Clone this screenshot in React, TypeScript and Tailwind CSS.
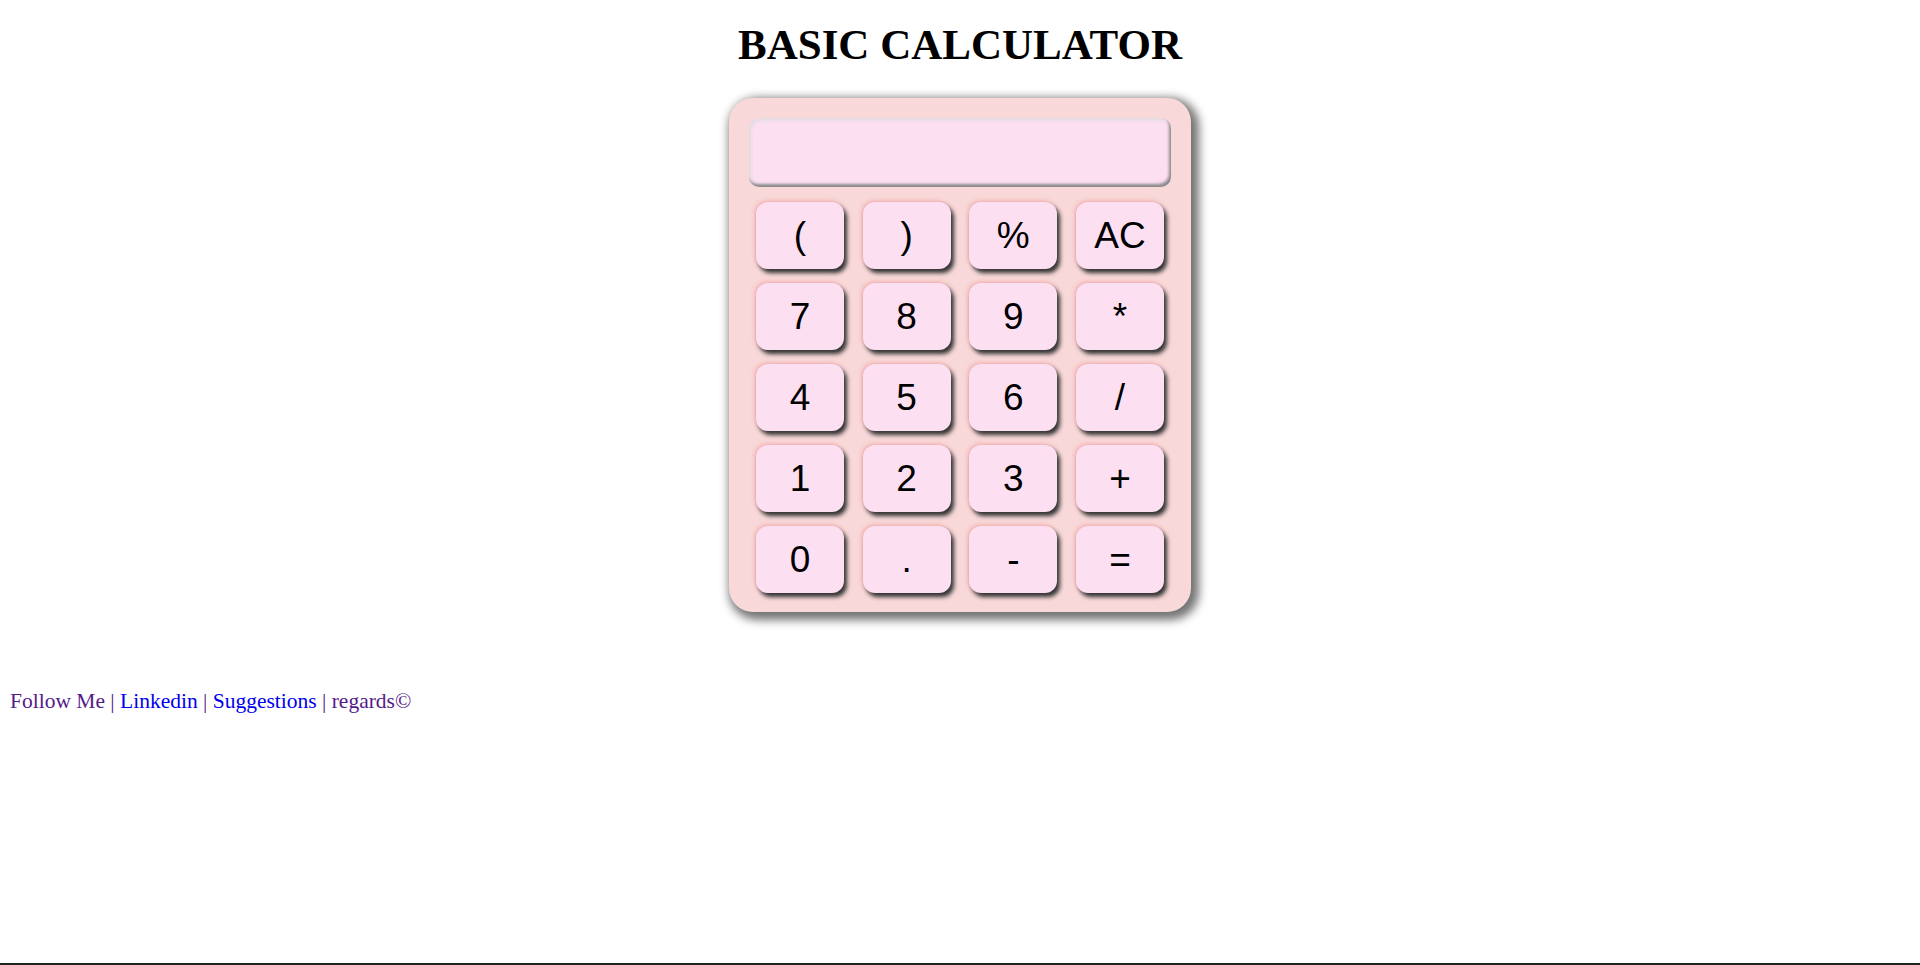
import React, { useState } from 'react';

const KEYS = [
  ['(', ')', '%', 'AC'],
  ['7', '8', '9', '*'],
  ['4', '5', '6', '/'],
  ['1', '2', '3', '+'],
  ['0', '.', '-', '='],
];

const App: React.FC = () => {
  const [expr, setExpr] = useState('');

  const press = (k: string) => {
    if (k === 'AC') return setExpr('');
    if (k === '=') {
      try {
        // eslint-disable-next-line no-new-func
        const val = Function(`"use strict"; return (${expr.replace(/%/g, '/100')})`)();
        setExpr(String(val));
      } catch {
        setExpr('Error');
      }
      return;
    }
    setExpr(prev => (prev === 'Error' ? k : prev + k));
  };

  return (
    <div className="h-screen flex flex-col bg-white border-b-2 border-[#222] font-['Liberation_Serif',serif]">
      <h1 className="text-center text-[43px] font-bold leading-normal mt-[13px] mb-[20px] text-black">
        BASIC CALCULATOR
      </h1>

      <div className="mx-auto w-[462px] h-[514px] bg-[#f8d8d8] rounded-[24px] shadow-[4px_4px_10px_4px_rgba(0,0,0,0.55)] px-[20px] pt-[20px]">
        <div className="h-[69px] rounded-[10px] bg-[#fddff2] shadow-[inset_-2px_-3px_3px_#8a8a8a,inset_2px_2px_4px_#dcdcdc] flex items-center justify-end px-4 text-[37px] font-['Liberation_Sans',Arial,sans-serif] overflow-hidden">
          {expr}
        </div>

        <div className="mt-[15px] mx-[7px] flex flex-col gap-[14px]">
          {KEYS.map((row, i) => (
            <div key={i} className="flex justify-between">
              {row.map(k => (
                <button
                  key={k}
                  onClick={() => press(k)}
                  className="w-[88px] h-[67px] rounded-[12px] bg-[#fddff2] text-black text-[37px] leading-none font-['Liberation_Sans',Arial,sans-serif] flex items-center justify-center shadow-[3px_4px_4px_#333,-1px_-1px_4px_#f2a9a9]"
                >
                  {k}
                </button>
              ))}
            </div>
          ))}
        </div>
      </div>

      <p className="mt-[73px] pl-[10px] text-[21.5px] leading-normal text-[#551a8b]">
        Follow Me | <a href="#" className="text-[#0000ee]">Linkedin</a> |{' '}
        <a href="#" className="text-[#0000ee]">Suggestions</a> | regards&copy;
      </p>
    </div>
  );
};

export default App;
